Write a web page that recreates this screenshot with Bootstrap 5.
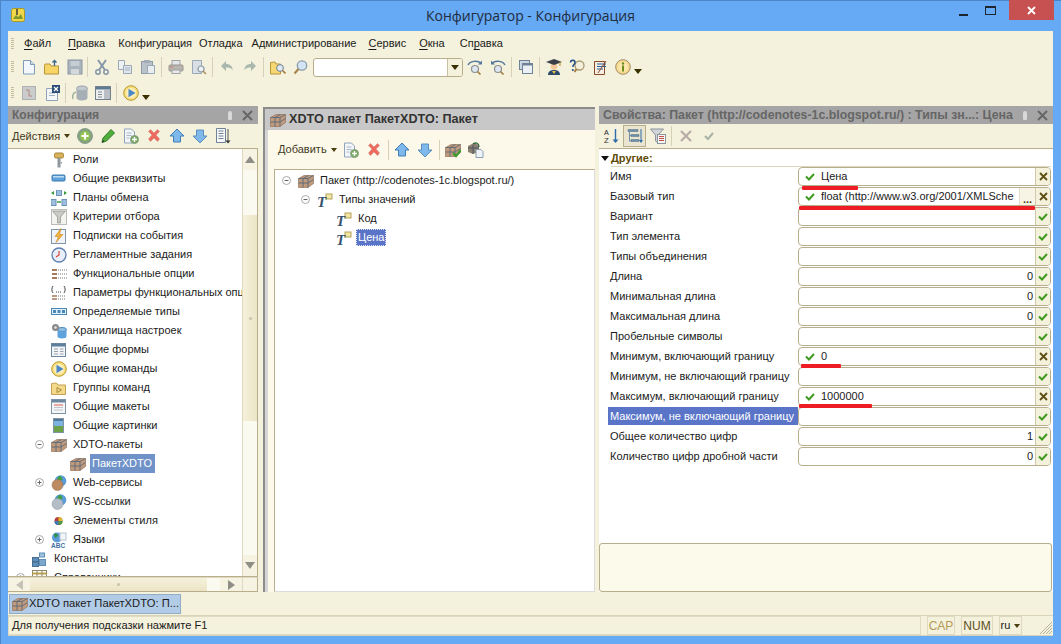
<!DOCTYPE html>
<html lang="ru">
<head>
<meta charset="UTF-8" />
<meta name="viewport" content="width=device-width, initial-scale=1.0" />
<title>Конфигуратор - Конфигурация</title>
<link href="https://cdn.jsdelivr.net/npm/bootstrap@5.3.2/dist/css/bootstrap.min.css" rel="stylesheet" />
<style>
  html, body { height: 644px; overflow: hidden; }
  body { background: #66a9f4; font: 11px/1 "Liberation Sans", Arial, sans-serif; color: #1b1b1b; }
  .ic { width: 16px; height: 16px; display: block; flex: none; }
  .app-win { height: 644px; box-shadow: inset 1px 1px 0 #4c86c8; }

  .title-bar { height: 31px; }
  .title-side { flex: 1 1 0; }
  .title-text { font: 14px "Open Sans", sans-serif; color: #1f2c3e; }
  .app-logo { width: 14px; height: 14px; margin: 8px 0 0 11px; }
  .win-btn { width: 27px; height: 21px; }
  .win-close { width: 45px; height: 20px; background: #c75050; margin: 0 7px 0 5px; }

  .client { margin: 0 8px 8px; height: 605px; background: #f4f1dd; }
  .grip { width: 3px; height: 12px; margin: 0 3px 0 3px; flex: none;
    background: repeating-linear-gradient(#c2bd9c 0 1px, transparent 1px 2px); }
  .menu-bar { height: 25px; }
  .menu-bar u { text-underline-offset: 2px; }
  .menu-bar span:nth-of-type(1) { margin-left: 7px; margin-right: 17px; }
  .menu-bar span:nth-of-type(2) { margin-right: 13px; }
  .menu-bar span:nth-of-type(3) { margin-right: 7px; }
  .menu-bar span:nth-of-type(4) { margin-right: 9px; }
  .menu-bar span:nth-of-type(5) { margin-right: 12px; }
  .menu-bar span:nth-of-type(6) { margin-right: 13px; }
  .menu-bar span:nth-of-type(7) { margin-right: 15px; }
  .tool-bar { height: 22px; }
  .tool-bar-2 { height: 28px; padding-top: 2px; }
  .tb-btn { width: 23px; height: 22px; flex: none; }
  .tb-sep { width: 1px; height: 20px; background: #d6d1b6; margin: 0 2px; flex: none; }
  .tb-sep-tight { margin: 0 2px 0 1px; }
  .tb-pressed { border: 1px solid #b8ae8c; background: #e9e5cf; }
  .tb-more { width: 8px; height: 5px; margin-top: 9px; flex: none; }
  .find-combo { width: 150px; height: 19px; margin-left: 1px; border: 1px solid #b8ae8c; border-radius: 3px; background: #fff; flex: none; overflow: hidden; }
  .find-drop { width: 15px; background: #f4f1dd; border-left: 1px solid #c8c1a2; }

  .work-area { height: 486px; }
  .panel-left { width: 250px; flex: none; }
  .panel-mid { width: 332px; flex: none; margin: 1px 4px 0 5px; background: #fcf9ea; border-left: 2px solid #8b8b8b; box-shadow: inset 3px 0 0 #d5d5d5; }
  .panel-right { flex: 1 1 0; min-width: 0; }

  .cap-bar { height: 18px; background: #a5a5a5; color: #666; font-weight: 700; padding: 0 5px 0 4px; flex: none; }
  .cap-title { font-size: 12px; }
  .cap-title-wide { font-size: 12.350px; }
  .pin { width: 4px; height: 9px; background: #d9d9d9; border-radius: 2px 2px 1px 1px; margin-right: 10px; }
  .cap-close { width: 11px; height: 11px; }
  .act-bar { height: 24px; padding-left: 4px; flex: none; }
  .act-btn { width: 23px; height: 22px; flex: none; }
  .act-label { color: #3f3a1c; }
  .caret { width: 0; height: 0; border: 3px solid transparent; border-top: 4px solid #4a3d10; border-bottom: 0; margin: 0 3px 0 4px; flex: none; }

  .tree-shell { border: 1px solid #b8ae8c; min-height: 0; border-left: 0; }
  .tree-box { background: #fff; overflow: hidden; min-width: 0; padding: 1px 0 0 1px; }
  .tree-row { height: 19px; white-space: nowrap; flex: none; }
  .lvl-1 { padding-left: 7px; }
  .lvl-2 { padding-left: 26px; }
  .lvl-3 { padding-left: 45px; }
  .exp-slot { width: 16px; flex: none; }
  .tree-exp { width: 9px; height: 9px; display: block; }
  .tree-text { margin-left: 6px; }
  .tree-sel { margin-left: 4px; padding: 4px 3px 4px 2px; background: #6f93c8; color: #fff; }
  .tree-focus { margin-left: 4px; padding: 3px 2px; background: #5a75c8; color: #fff; outline: 1px dotted #dfe6ff; outline-offset: -1px; }

  .v-scroll { width: 15px; flex: none; background: #fbfaf1; border-left: 1px solid #ded9bf; }
  .h-scroll { height: 15px; flex: none; background: #fbfaf1; border: 1px solid #b8ae8c; border-top-color: #ded9bf; border-left: 0; }
  .sc-btn { background: #f6f3e2; flex: none; }
  .v-scroll .sc-btn { height: 21px; }
  .h-scroll .sc-btn { width: 22px; }
  .sc-corner { width: 15px; flex: none; background: #f6f3e2; border-left: 1px solid #ded9bf; }
  .sc-thumb-v { height: 206px; margin-top: 45px; background: linear-gradient(90deg, #f6f1dc, #ebe4c6); flex: none; }
  .sc-thumb-h { width: 177px; background: linear-gradient(#f6f1dc, #ebe4c6); flex: none; }
  .sc-dot { width: 3px; height: 3px; border-radius: 50%; background: #c8c3ae; }
  .tri-up, .tri-down, .tri-left, .tri-right { width: 0; height: 0; border: 5px solid transparent; }
  .tri-up { border-bottom: 7px solid #8e8e86; border-top: 0; }
  .tri-down { border-top: 7px solid #8e8e86; border-bottom: 0; }
  .tri-left { border-right: 7px solid #c4c2b6; border-left: 0; }
  .tri-right { border-left: 7px solid #8e8e86; border-right: 0; }

  .mid-cap { height: 23px; background: #c8c8c8; border-top: 2px solid #8b8b8b; padding-left: 5px; color: #333; font-weight: 700; flex: none; }
  .mid-cap b { font-size: 12.6px; margin-left: 3px; }
  .mid-tools { height: 39px; padding-left: 13px; flex: none; }
  .mid-tree { margin-left: 9px; border-left: 1px solid #b8ae8c; border-top: 1px solid #b8ae8c; border-bottom: 1px solid #dcdcdc; border-right: 1px solid #dcdcdc; background: #fff; padding-top: 1px; }

  .prop-bar { height: 25px; border-bottom: 1px solid #b8ae8c; padding-left: 1px; flex: none; }
  .prop-body { background: #fff; min-height: 0; }
  .prop-cat { height: 18px; margin: 0 2px; }
  .cat-tri { width: 0; height: 0; border: 4px solid transparent; border-top: 5px solid #111; border-bottom: 0; margin-right: 2px; }
  .cat-name { color: #5e4a05; font-weight: 700; border-bottom: 1px solid #dcd8c0; flex: 1 1 0; height: 18px; line-height: 18px; }
  .prop-row { height: 20px; flex: none; }
  .prop-label { width: 199px; flex: none; padding-left: 9px; white-space: nowrap; }
  .prop-label span { display: block; padding: 4px 2px 3px; height: 18px; }
  .prop-sel { background: #5a75c8; color: #fff; }
  .prop-field { height: 19px; margin-right: 2px; border: 1px solid #b8ae8c; border-radius: 4px; background: #fff; flex: 1 1 0; min-width: 0; position: relative; }
  .f-val { padding: 0 2px 0 6px; flex: 1 1 0; min-width: 0; white-space: nowrap; overflow: hidden; }
  .f-val svg { margin-right: 6px; flex: none; }
  .f-num { padding-right: 2px; flex: 1 1 0; text-align: right; }
  .f-btn { width: 15px; flex: none; background: #f4f1dd; border-left: 1px solid #cfc9ab; border-radius: 0 3px 3px 0; }
  .f-dots { width: 16px; flex: none; background: #f7f4e5; border-left: 1px solid #e2decb; font-weight: 700; padding-top: 6px; color: #4a3d10; text-align: center; }
  .red-mark { position: absolute; height: 3.500px; background: #ee1c25; border-radius: 1px; z-index: 2; }
  .mark-name { width: 56px; left: 3px; top: 18px; }
  .mark-type { width: 236px; left: 0; top: 18px; }
  .mark-min { width: 40px; left: 2px; top: 16px; }
  .mark-max { width: 73px; left: 0; top: 16px; }
  .prop-desc { height: 49px; margin-right: 1px; background: #fcfaeb; border: 1px solid #b8ae8c; border-radius: 3px; flex: none; }

  .task-bar { height: 24px; border-bottom: 1px solid #d8d4ba; padding: 2px 0 2px 1px; flex: none; }
  .task-tab { width: 172px; height: 20px; background: #b2cbe6; border: 1px solid #94adc6; padding-left: 2px; white-space: nowrap; font-size: 11.200px; }
  .task-tab span { margin-left: 1px; }
  .status-bar { height: 20px; flex: none; border-bottom: 1px solid #d8d4ba; }
  .st-main { width: 913px; height: 19px; border: 1px solid #e0dcc4; padding-left: 3px; flex: none; font-size: 11.100px; }
  .st-cell { height: 19px; border: 1px solid #dedac2; margin-left: 6px; flex: none; justify-content: center; font-size: 12px; }
  .st-cap { width: 28px; color: #b39a55; }
  .st-num { width: 32px; color: #5e4f1c; }
  .st-lang { width: 23px; font-size: 11px; }
  .st-grip { width: 13px; height: 13px; margin: 5px 0 0 17px; }
</style>
</head>
<body>
<svg width="0" height="0" class="d-block">
  <defs>
    <symbol id="i-logo" viewBox="0 0 14 14"><rect x=".5" y=".5" width="13" height="13" rx="2" fill="#f1d84a" stroke="#a89a24"/><path d="M2 11l3-4 2 2 3-3 2 5z" fill="#7f9a2a"/><path d="M6 1v6" stroke="#333" stroke-width="1.4"/></symbol>
    <symbol id="i-doc" viewBox="0 0 16 16"><path d="M2.500 1.500h7l4 4v9.500h-11z" fill="#f3f7fb" stroke="#7f9cb7"/><path d="M9.500 1.500v4h4" fill="#cddcea" stroke="#7f9cb7"/></symbol>
    <symbol id="i-open" viewBox="0 0 16 16"><path d="M.5 6.500V15h14V7H7L6 5H1z" fill="#f6d466" stroke="#b8953a"/><path d="M10.500 7V1.500M8.500 3.500l2-2 2 2" fill="none" stroke="#3a6a8c" stroke-width="1.300"/></symbol>
    <symbol id="i-save" viewBox="0 0 16 16"><rect x="1" y="1" width="14" height="14" fill="#a9b3bc" stroke="#8b98a4"/><rect x="3.500" y="2" width="9" height="5" fill="#c6ced5"/><rect x="4" y="10" width="8" height="5" fill="#d3d8dc"/></symbol>
    <symbol id="i-cut" viewBox="0 0 16 16"><path d="M4 1l7 10M12 1L5 11" stroke="#8596a8" stroke-width="2" fill="none"/><circle cx="4" cy="13" r="2.200" fill="none" stroke="#8596a8" stroke-width="1.500"/><circle cx="12" cy="13" r="2.200" fill="none" stroke="#8596a8" stroke-width="1.500"/></symbol>
    <symbol id="i-copy" viewBox="0 0 16 16"><path d="M1.500 1.500h6v9h-6z" fill="#eef1f4" stroke="#9aa9b8"/><path d="M6.500 6.500h8v8h-8z" fill="#dfe5ea" stroke="#9aa9b8"/><path d="M8 9h5M8 11h5" stroke="#a5b2bf"/></symbol>
    <symbol id="i-paste" viewBox="0 0 16 16"><rect x="1.500" y="2.500" width="11" height="12" fill="#b9c2c9" stroke="#8e9ca9"/><rect x="4" y="1" width="6" height="3" fill="#a2adb7"/><path d="M7.500 6.500h7v8h-7z" fill="#e9edf0" stroke="#9aa9b8"/></symbol>
    <symbol id="i-print" viewBox="0 0 16 16"><rect x="4" y="1.500" width="8" height="5" fill="#e3e5e6" stroke="#a0a4a8"/><rect x="1" y="6" width="14" height="6" rx="1" fill="#b9b3ad" stroke="#9a9590"/><rect x="4" y="11" width="8" height="3.500" fill="#e9e9e9" stroke="#a0a4a8"/><rect x="2.500" y="7.500" width="2" height="1" fill="#d06a5a"/></symbol>
    <symbol id="i-prev" viewBox="0 0 16 16"><path d="M1.500 1.500h9v13h-9z" fill="#d9dfe4" stroke="#9aa9b8"/><circle cx="10" cy="10" r="3" fill="#eef2f5" stroke="#8a98a5" stroke-width="1.200"/><path d="M12 12l3 3" stroke="#b08f5e" stroke-width="1.600"/></symbol>
    <symbol id="i-undo" viewBox="0 0 16 16"><path d="M2 7l5-5v3c4 0 6 2 7 6-2-2-4-2.500-7-2.500V12z" fill="#a9b8ae"/></symbol>
    <symbol id="i-redo" viewBox="0 0 16 16"><path d="M14 7L9 2v3C5 5 3 7 2 11c2-2 4-2.500 7-2.500V12z" fill="#a9b8ae"/></symbol>
    <symbol id="i-fold-lens" viewBox="0 0 16 16"><path d="M.5 3.500V15h10V5H6L5 3z" fill="#f6d872" stroke="#b8953a"/><circle cx="10" cy="9" r="3.400" fill="#dfeaf4" stroke="#6f7f8f"/><path d="M12.500 11.500l3 3" stroke="#a47c3f" stroke-width="1.700"/></symbol>
    <symbol id="i-lens" viewBox="0 0 16 16"><circle cx="9" cy="6.500" r="4.700" fill="#d3e4f5" stroke="#8b9bab" stroke-width="1.300"/><path d="M5.500 10l-4 4.500" stroke="#a9864f" stroke-width="2.200"/></symbol>
    <symbol id="i-find-a" viewBox="0 0 16 16"><circle cx="8" cy="10" r="3.500" fill="#dbe6f0" stroke="#8c8f92" stroke-width="1.200"/><path d="M10.500 12.500l3 3" stroke="#a47c3f" stroke-width="1.600"/><path d="M1 6c2-4 9-5 13-2" fill="none" stroke="#54799c" stroke-width="1.400"/><path d="M15 1.500v4h-4z" fill="#54799c"/></symbol>
    <symbol id="i-find-b" viewBox="0 0 16 16"><circle cx="8" cy="10" r="3.500" fill="#dbe6f0" stroke="#8c8f92" stroke-width="1.200"/><path d="M10.500 12.500l3 3" stroke="#a47c3f" stroke-width="1.600"/><path d="M15 6C13 2 6 1 2 4" fill="none" stroke="#54799c" stroke-width="1.400"/><path d="M1 1.500v4h4z" fill="#54799c"/></symbol>
    <symbol id="i-windows" viewBox="0 0 16 16"><rect x="1.500" y="1.500" width="10" height="9" fill="#cdd8e4" stroke="#6f8296"/><rect x="4.500" y="4.500" width="10" height="10" fill="#eaf0f6" stroke="#6f8296"/><rect x="4.500" y="4.500" width="10" height="2" fill="#6f8296"/></symbol>
    <symbol id="i-student" viewBox="0 0 16 16"><path d="M2 16c0-4 3-5 6-5s6 1 6 5z" fill="#2d4a6a"/><path d="M6 12l2 3 2-3z" fill="#e9c24a"/><circle cx="8" cy="7.500" r="3.300" fill="#f2c79a"/><path d="M0 3l8-3 8 3-8 3z" fill="#3a3f4a"/><path d="M14 3v4" stroke="#b88a20"/></symbol>
    <symbol id="i-help-lens" viewBox="0 0 16 16"><circle cx="10.500" cy="6.500" r="4.500" fill="#f4efdd" stroke="#a89a70" stroke-width="1.300"/><path d="M7.500 10l-2 3" stroke="#a47c3f" stroke-width="2"/><path d="M1.500 3.500c0-3 4.500-3 4.500 0 0 2-2.200 2-2.200 4.500" fill="none" stroke="#1e4e84" stroke-width="1.500"/><circle cx="3.800" cy="11" r="1" fill="#1e4e84"/></symbol>
    <symbol id="i-book" viewBox="0 0 16 16"><path d="M2.500 2.500h10v13h-10z" fill="#f6eee0" stroke="#8a4a2a"/><path d="M5 5h9M5 7.500h9M5 10h6" stroke="#2b5f9c"/><path d="M6 14l8-12" stroke="#8a4a2a"/></symbol>
    <symbol id="i-info" viewBox="0 0 16 16"><circle cx="8" cy="8" r="7.300" fill="#f7d98b" stroke="#a08d6c"/><circle cx="8" cy="8" r="5" fill="#fbe6ad"/><rect x="7" y="6.500" width="2" height="6" fill="#6b8e1f"/><circle cx="8" cy="4.500" r="1.200" fill="#6b8e1f"/></symbol>
    <symbol id="i-more" viewBox="0 0 8 5"><path d="M0 0h8L4 5z" fill="#3b3000"/></symbol>
    <symbol id="i-tb-tree" viewBox="0 0 16 16"><rect x="1.500" y="1.500" width="13" height="13" fill="#c9cbcc" stroke="#aeb0b2"/><path d="M5 5h3M8 5v6h3" fill="none" stroke="#b08a7a"/></symbol>
    <symbol id="i-tb-x" viewBox="0 0 16 16"><path d="M2.500 3.500h8l3 3v9h-11z" fill="#f4f6f8" stroke="#8ea3b7"/><path d="M5 8h6M5 10.500h6" stroke="#9fb0c0"/><rect x="8" y="0" width="8" height="8" fill="#2a4d78"/><path d="M10 2l4 4M14 2l-4 4" stroke="#fff" stroke-width="1.200"/></symbol>
    <symbol id="i-db" viewBox="0 0 16 16"><ellipse cx="10" cy="3.500" rx="5.500" ry="2.500" fill="#c3c9ce" stroke="#99a2aa"/><path d="M4.500 3.500V13c0 1.500 2.500 2.500 5.500 2.500s5.500-1 5.500-2.500V3.500c0 1.500-2.500 2.500-5.500 2.500s-5.500-1-5.500-2.500z" fill="#a7afb6"/><path d="M1 14c-1-4 0-6 3-7" fill="none" stroke="#9fb39f" stroke-width="1.500"/></symbol>
    <symbol id="i-form-g" viewBox="0 0 16 16"><rect x=".5" y="1.500" width="15" height="13" fill="#eceeef" stroke="#71808c"/><rect x="1" y="2" width="14" height="2.500" fill="#5d7a93"/><rect x="9" y="5" width="6" height="9" fill="#b9bfc4"/><path d="M3 7h4M3 9.500h4M3 12h4" stroke="#7f8b95"/></symbol>
    <symbol id="i-run" viewBox="0 0 16 16"><circle cx="8" cy="8" r="7.300" fill="#f7dc7a" stroke="#b99a2e"/><circle cx="8" cy="8" r="5.300" fill="#fbeeb8"/><path d="M5.500 3.800L12.500 8l-7 4.200z" fill="#4c88c4"/></symbol>

    <symbol id="i-add-round" viewBox="0 0 16 16"><circle cx="8" cy="8" r="7.500" fill="#7fa47d" stroke="#8f9f90"/><circle cx="8" cy="8" r="5" fill="#93c24f"/><path d="M8 4.500v7M4.500 8h7" stroke="#fff" stroke-width="2"/></symbol>
    <symbol id="i-pencil" viewBox="0 0 16 16"><path d="M11 1.500l3.500 3.500-8 8L2 14.500 3 10z" fill="#4fae3b" stroke="#2f7d28"/><path d="M2 14.500L3 12l1.500 1.500z" fill="#333"/></symbol>
    <symbol id="i-doc-add" viewBox="0 0 16 16"><path d="M1.500 1h7l3 3v11h-10z" fill="#f3f6f9" stroke="#8fa4b8"/><path d="M3.500 5h5M3.500 7.500h5M3.500 10h3" stroke="#aab8c6"/><circle cx="11.500" cy="11.500" r="4" fill="#74a85a" stroke="#8a9f88"/><path d="M11.500 9v5M9 11.500h5" stroke="#fff" stroke-width="1.400"/></symbol>
    <symbol id="i-del" viewBox="0 0 16 16"><path d="M2.500 3.500l2-2L8 5l3.500-3.500 2 2L10 7l3.500 4-2 2.500L8 10l-3.500 3.500-2-2.500L6 7z" fill="#ee6a5e" stroke="#d2887e" stroke-width=".6"/></symbol>
    <symbol id="i-up" viewBox="0 0 16 16"><path d="M8 1l7 7h-3.500v6h-7V8H1z" fill="#7fb8ea" stroke="#3f7db4"/></symbol>
    <symbol id="i-down" viewBox="0 0 16 16"><path d="M8 15l7-7h-3.500V2h-7v6H1z" fill="#7fb8ea" stroke="#5b8fbd"/></symbol>
    <symbol id="i-list" viewBox="0 0 16 16"><path d="M1.500 .5h9v14h-9z" fill="#f4f6f8" stroke="#6f8296"/><path d="M3.500 3h5M3.500 5.500h5M3.500 8h5M3.500 10.500h5" stroke="#6f8296"/><path d="M13 1v12" stroke="#555"/><path d="M10.500 12.500h5L13 15.500z" fill="#333"/></symbol>
    <symbol id="i-box" viewBox="0 0 16 16"><path d="M.5 5.500L6 2.500h9.500v8L10 14.500H.5z" fill="#c09a7c" stroke="#96745a" stroke-width=".7"/><path d="M.5 5.500h9.500l5.500-3M10 5.500v9M.5 10h9.500l5.500-3.500M5 5.500v9M5 5.500l5.500-3" fill="none" stroke="#5b6a78" stroke-width=".9"/></symbol>
    <symbol id="i-box-ok" viewBox="0 0 16 16"><use href="#i-box"/><path d="M8 11l3 3 5-6" fill="none" stroke="#3e9b2d" stroke-width="2.200"/></symbol>
    <symbol id="i-box-doc" viewBox="0 0 16 16"><path d="M0 4l6-3 5 2v7l-6 2-5-2z" fill="#8b8172"/><path d="M0 6h11M5 3v9" stroke="#4f5660"/><path d="M8 7.500h5l2 2V15.500H8z" fill="#eef3f7" stroke="#89a0b4"/><path d="M5 2c3-2 6-1 6 3" fill="none" stroke="#2f6a3a" stroke-width="1.300"/></symbol>

    <symbol id="i-key" viewBox="0 0 16 16"><rect x="3.500" y="1" width="9" height="5" rx="1.500" fill="#d9b35a" stroke="#a8853d"/><rect x="6.500" y="6" width="3" height="9.500" fill="#8f979f"/><rect x="9.500" y="10" width="1.500" height="1.500" fill="#8f979f"/></symbol>
    <symbol id="i-attr" viewBox="0 0 16 16"><rect x="1" y="4" width="13" height="6" rx="1" fill="#5ea3dc" stroke="#3a78ad"/><rect x="2" y="5" width="11" height="1.500" fill="#bcdcf3"/></symbol>
    <symbol id="i-exch" viewBox="0 0 16 16"><rect x="5.500" y="0" width="5" height="5.500" fill="#9dbfdf" stroke="#6d92b5"/><rect x="0" y="9.500" width="5" height="6" fill="#9dbfdf" stroke="#6d92b5"/><rect x="11" y="9.500" width="5" height="6" fill="#9dbfdf" stroke="#6d92b5"/><path d="M0 3l3-2v4zM16 3l-3-2v4z" fill="#3e9b3e"/><path d="M6 12h4" stroke="#3e9b3e" stroke-width="1.500"/></symbol>
    <symbol id="i-filter" viewBox="0 0 16 16"><rect x=".5" y=".5" width="15" height="15" fill="#f3f3f0" stroke="#bcbcb8"/><path d="M1.500 2h13L9.500 8v6h-3V8z" fill="#c9c9c5" stroke="#8f8f8a" stroke-width=".7"/></symbol>
    <symbol id="i-bolt" viewBox="0 0 16 16"><rect x=".5" y="1.500" width="14" height="14" fill="#f0f4f8" stroke="#8196ab"/><path d="M10 .5L4 8.500h3.500L5 14.500l7-8H8.500z" fill="#f0b53c" stroke="#c6841f" stroke-width=".6"/></symbol>
    <symbol id="i-clock" viewBox="0 0 16 16"><circle cx="8" cy="8" r="7" fill="#e7eef7" stroke="#5d7fae" stroke-width="1.300"/><path d="M8 4v4l-3 2" stroke="#d8433d" fill="none" stroke-width="1.200"/></symbol>
    <symbol id="i-func" viewBox="0 0 16 16"><path d="M1 4h5M1 8h5M1 12h5" stroke="#a77a5a" stroke-width="2"/><path d="M7 4h9M7 8h9M7 12h9" stroke="#777" stroke-dasharray="1 1"/></symbol>
    <symbol id="i-param" viewBox="0 0 16 16"><path d="M2 1C.5 3 .5 6 2 8M13 1c1.500 2 1.500 5 0 7" fill="none" stroke="#444"/><path d="M5 7h1M7 7h1M9 7h1" stroke="#444"/><path d="M1 11h5M1 14h5" stroke="#a77a5a" stroke-width="1.500"/><path d="M7 11h8M7 14h8" stroke="#777" stroke-dasharray="1 1"/></symbol>
    <symbol id="i-types" viewBox="0 0 16 16"><rect x=".5" y="4.500" width="15" height="6" fill="#dff0fa" stroke="#4b87b5"/><rect x="2" y="6" width="3" height="3" fill="#4b87b5"/><rect x="6.500" y="6" width="3" height="3" fill="#4b87b5"/><rect x="11" y="6" width="3" height="3" fill="#4b87b5"/></symbol>
    <symbol id="i-store" viewBox="0 0 16 16"><ellipse cx="11" cy="6.500" rx="4.500" ry="2" fill="#8fc1e6" stroke="#4a87b8"/><path d="M6.500 6.500v7c0 1 2 2 4.500 2s4.500-1 4.500-2v-7c0 1-2 2-4.500 2s-4.500-1-4.500-2z" fill="#5ea3dc"/><circle cx="4.500" cy="4.500" r="3.500" fill="#8a8a8a"/><circle cx="4.500" cy="4.500" r="1.300" fill="#e4e4e4"/></symbol>
    <symbol id="i-form" viewBox="0 0 16 16"><rect x=".5" y="1.500" width="14" height="13" fill="#f2f4f6" stroke="#6d879f"/><rect x="1" y="2" width="13" height="2.500" fill="#5d7f9e"/><path d="M3 7h4M3 9.500h4M3 12h4M9 7h3.500M9 9.500h3.500M9 12h3.500" stroke="#97a3ae"/></symbol>
    <symbol id="i-folder-cmd" viewBox="0 0 16 16"><path d="M.5 3.500V14.500h14V5H7L5.500 3z" fill="#f4d98a" stroke="#c3a154"/><path d="M6 7.500l4.500 2.500L6 12.500z" fill="none" stroke="#a88b3f"/></symbol>
    <symbol id="i-layout" viewBox="0 0 16 16"><rect x=".5" y=".5" width="14" height="14" fill="#f5f6f7" stroke="#7f93a7"/><rect x="1" y="1" width="13" height="2.500" fill="#6d879f"/><path d="M3 6h9" stroke="#dd5a4a"/><path d="M3 8.500h9M3 11h9" stroke="#bcc5cd"/></symbol>
    <symbol id="i-pic" viewBox="0 0 16 16"><rect x="2.500" y=".5" width="10" height="14" fill="#7db4df" stroke="#7f93a7"/><rect x="3" y="8" width="9" height="6" fill="#6ea24a"/><rect x="3" y="1" width="9" height="2" fill="#50789b"/></symbol>
    <symbol id="i-globe-b" viewBox="0 0 16 16"><circle cx="9.500" cy="6" r="5.800" fill="#5b9bd8"/><path d="M8 1c2 0 4 2 3 4l-3 1-2-2z" fill="#3ea040"/><circle cx="6.500" cy="10" r="5.500" fill="#bd8b62" stroke="#97704f" stroke-width=".5"/></symbol>
    <symbol id="i-globe-g" viewBox="0 0 16 16"><circle cx="9.500" cy="6" r="5.800" fill="#5b9bd8"/><path d="M8 1c2 0 4 2 3 4l-3 1-2-2z" fill="#3ea040"/><circle cx="6.500" cy="10" r="5.500" fill="#b5bdc6" stroke="#8d969f" stroke-width=".5"/></symbol>
    <symbol id="i-dots" viewBox="0 0 16 16"><circle cx="7.500" cy="8" r="4" fill="#b33c3c"/><path d="M7.500 4a4 4 0 0 1 4 4h-4z" fill="#e0b92d"/><path d="M3.500 8a4 4 0 0 0 4 4V8z" fill="#3b7cbd"/><path d="M11.500 8a4 4 0 0 1-4 4V8z" fill="#4aa04a"/></symbol>
    <symbol id="i-lang" viewBox="0 0 16 16"><circle cx="6" cy="5.500" r="5" fill="#5b9bd8"/><path d="M3 2c2-1 4 0 4 2L4 6z" fill="#2f8f3c"/><rect x="9" y="1" width="6" height="7" fill="#f3f6f9" stroke="#b7c4d0"/><text x="0" y="15.500" font-size="6.500" font-weight="700" fill="#3f6f9e" font-family="Liberation Sans">ABC</text></symbol>
    <symbol id="i-const" viewBox="0 0 16 16"><rect x=".5" y="6.500" width="6" height="4" fill="#5f8fb8" stroke="#456f94"/><rect x="7.500" y="2" width="5" height="4" fill="#9fc3e2" stroke="#5f8fb8"/><rect x=".5" y="11" width="6" height="4.500" fill="#5f8fb8" stroke="#456f94"/><rect x="7.500" y="8.500" width="6" height="6" fill="#7ba7cc" stroke="#5f8fb8"/></symbol>
    <symbol id="i-cat" viewBox="0 0 16 16"><rect x=".5" y=".5" width="14" height="14" fill="#fff" stroke="#8f8a66"/><path d="M.5 3.500h14" stroke="#c1a24a" stroke-width="2"/><path d="M5 1v13M10 1v13M1 8h13" stroke="#8f8a66"/></symbol>
    <symbol id="i-t" viewBox="0 0 16 16"><rect x="9" y="2" width="6" height="5" fill="#f3e6a2" stroke="#b3a15b"/><text x="0" y="15" font-size="15" font-weight="700" font-style="italic" fill="#38536f" font-family="Liberation Serif">T</text></symbol>

    <symbol id="i-sort" viewBox="0 0 16 16"><text x="0" y="7" font-size="8" fill="#333" font-family="Liberation Mono">A</text><text x="0" y="15" font-size="8" fill="#333" font-family="Liberation Mono">Z</text><path d="M11.500 1v13" stroke="#2f6da8" stroke-width="1.400"/><path d="M8.500 11.500h6L11.500 15z" fill="#2f6da8"/></symbol>
    <symbol id="i-cats" viewBox="0 0 16 16"><path d="M1 1.500h10v2H1zM4 6.500h8v2H4zM4 11.500h8v2H4z" fill="#6f8fa8" stroke="#4f6f88" stroke-width=".5"/><path d="M2.500 3.500v9.500h2M2.500 7.500h2" fill="none" stroke="#6f8fa8"/><path d="M14 1v13" stroke="#2f6da8"/><path d="M12 12h4l-2 3z" fill="#2f6da8"/></symbol>
    <symbol id="i-filt" viewBox="0 0 16 16"><path d="M.5 1h13L8 7v8l-2.500-2V7z" fill="#d1d5d9" stroke="#8c949c"/><rect x="7.500" y="6.500" width="8" height="9" fill="#f4f6f8" stroke="#8c949c"/><path d="M9 8.500h5M9 10.500h5M9 12.500h5" stroke="#c05040"/></symbol>
    <symbol id="i-x-gray" viewBox="0 0 16 16"><path d="M3 3l10 10M13 3L3 13" stroke="#b7aca6" stroke-width="2.200"/></symbol>
    <symbol id="i-ok-gray" viewBox="0 0 16 16"><path d="M4 8l3 3 5-6" fill="none" stroke="#a9b3a5" stroke-width="2"/></symbol>

    <symbol id="i-check" viewBox="0 0 10 8"><path d="M1 3.500l3 3 5-5.500" fill="none" stroke="#3f9b1f" stroke-width="2"/></symbol>
    <symbol id="i-cross" viewBox="0 0 9 9"><path d="M1 1l7 7M8 1L1 8" stroke="#5e4f12" stroke-width="1.800"/></symbol>
    <symbol id="i-minus" viewBox="0 0 9 9"><circle cx="4.500" cy="4.500" r="4" fill="#fff" stroke="#a8a8a8"/><path d="M2.500 4.500h4" stroke="#666"/></symbol>
    <symbol id="i-plus" viewBox="0 0 9 9"><circle cx="4.500" cy="4.500" r="4" fill="#fff" stroke="#a8a8a8"/><path d="M2.500 4.500h4M4.500 2.500v4" stroke="#666"/></symbol>
  </defs>
</svg>

<div class="app-win d-flex flex-column">
  <div class="title-bar d-flex align-items-center">
    <div class="title-side align-self-start"><svg class="app-logo d-block"><use href="#i-logo"/></svg></div>
    <div class="title-text">Конфигуратор - Конфигурация</div>
    <div class="title-side align-self-start d-flex justify-content-end">
      <div class="win-btn d-flex align-items-center justify-content-center"><svg width="9" height="3" class="mt-2"><rect width="9" height="2" y="1" fill="#1d2530"/></svg></div>
      <div class="win-btn d-flex align-items-center justify-content-center"><svg width="11" height="9"><rect x=".5" y=".5" width="10" height="8" fill="none" stroke="#1d2530"/><rect width="11" height="2" fill="#1d2530"/></svg></div>
      <div class="win-close d-flex align-items-center justify-content-center"><svg width="9" height="9"><path d="M1 1l7 7M8 1L1 8" stroke="#fff" stroke-width="1.800"/></svg></div>
    </div>
  </div>

  <div class="client d-flex flex-column">
    <div class="menu-bar d-flex align-items-center">
      <div class="grip"></div>
      <span><u>Ф</u>айл</span>
      <span><u>П</u>равка</span>
      <span>Конфигурация</span>
      <span>Отладка</span>
      <span>Администрирование</span>
      <span><u>С</u>ервис</span>
      <span><u>О</u>кна</span>
      <span>Сп<u>р</u>авка</span>
    </div>

    <div class="tool-bar d-flex align-items-center">
      <div class="grip"></div>
      <div class="tb-btn d-flex align-items-center justify-content-center"><svg class="ic"><use href="#i-doc"/></svg></div>
      <div class="tb-btn d-flex align-items-center justify-content-center"><svg class="ic"><use href="#i-open"/></svg></div>
      <div class="tb-btn d-flex align-items-center justify-content-center"><svg class="ic"><use href="#i-save"/></svg></div>
      <div class="tb-sep tb-sep-tight"></div>
      <div class="tb-btn d-flex align-items-center justify-content-center"><svg class="ic"><use href="#i-cut"/></svg></div>
      <div class="tb-btn d-flex align-items-center justify-content-center"><svg class="ic"><use href="#i-copy"/></svg></div>
      <div class="tb-btn d-flex align-items-center justify-content-center"><svg class="ic"><use href="#i-paste"/></svg></div>
      <div class="tb-sep"></div>
      <div class="tb-btn d-flex align-items-center justify-content-center"><svg class="ic"><use href="#i-print"/></svg></div>
      <div class="tb-btn d-flex align-items-center justify-content-center"><svg class="ic"><use href="#i-prev"/></svg></div>
      <div class="tb-sep"></div>
      <div class="tb-btn d-flex align-items-center justify-content-center"><svg class="ic"><use href="#i-undo"/></svg></div>
      <div class="tb-btn d-flex align-items-center justify-content-center"><svg class="ic"><use href="#i-redo"/></svg></div>
      <div class="tb-sep"></div>
      <div class="tb-btn d-flex align-items-center justify-content-center"><svg class="ic"><use href="#i-fold-lens"/></svg></div>
      <div class="tb-btn d-flex align-items-center justify-content-center"><svg class="ic"><use href="#i-lens"/></svg></div>
      <div class="find-combo d-flex"><div class="flex-grow-1"></div><div class="find-drop d-flex align-items-center justify-content-center"><svg width="8" height="5"><use href="#i-more"/></svg></div></div>
      <div class="tb-btn d-flex align-items-center justify-content-center"><svg class="ic"><use href="#i-find-a"/></svg></div>
      <div class="tb-btn d-flex align-items-center justify-content-center"><svg class="ic"><use href="#i-find-b"/></svg></div>
      <div class="tb-sep"></div>
      <div class="tb-btn d-flex align-items-center justify-content-center"><svg class="ic"><use href="#i-windows"/></svg></div>
      <div class="tb-sep"></div>
      <div class="tb-btn d-flex align-items-center justify-content-center"><svg class="ic"><use href="#i-student"/></svg></div>
      <div class="tb-btn d-flex align-items-center justify-content-center"><svg class="ic"><use href="#i-help-lens"/></svg></div>
      <div class="tb-btn d-flex align-items-center justify-content-center"><svg class="ic"><use href="#i-book"/></svg></div>
      <div class="tb-btn d-flex align-items-center justify-content-center"><svg class="ic"><use href="#i-info"/></svg></div>
      <svg class="tb-more"><use href="#i-more"/></svg>
    </div>

    <div class="tool-bar-2 d-flex align-items-center">
      <div class="grip"></div>
      <div class="tb-btn d-flex align-items-center justify-content-center"><svg class="ic"><use href="#i-tb-tree"/></svg></div>
      <div class="tb-btn d-flex align-items-center justify-content-center"><svg class="ic"><use href="#i-tb-x"/></svg></div>
      <div class="tb-sep"></div>
      <div class="tb-btn d-flex align-items-center justify-content-center"><svg class="ic"><use href="#i-db"/></svg></div>
      <div class="tb-btn d-flex align-items-center justify-content-center"><svg class="ic"><use href="#i-form-g"/></svg></div>
      <div class="tb-sep"></div>
      <div class="tb-btn d-flex align-items-center justify-content-center"><svg class="ic"><use href="#i-run"/></svg></div>
      <svg class="tb-more"><use href="#i-more"/></svg>
    </div>

    <div class="work-area d-flex">
      <!-- дерево конфигурации -->
      <div class="panel-left d-flex flex-column">
        <div class="cap-bar d-flex align-items-center">
          <span class="cap-title flex-grow-1">Конфигурация</span>
          <div class="pin"></div>
          <svg class="cap-close"><path d="M1 1l9 9M10 1l-9 9" stroke="#666" stroke-width="2"/></svg>
        </div>
        <div class="act-bar d-flex align-items-center">
          <span class="act-label">Действия</span><span class="caret"></span>
          <div class="act-btn d-flex align-items-center justify-content-center"><svg class="ic"><use href="#i-add-round"/></svg></div>
          <div class="act-btn d-flex align-items-center justify-content-center"><svg class="ic"><use href="#i-pencil"/></svg></div>
          <div class="act-btn d-flex align-items-center justify-content-center"><svg class="ic"><use href="#i-doc-add"/></svg></div>
          <div class="act-btn d-flex align-items-center justify-content-center"><svg class="ic"><use href="#i-del"/></svg></div>
          <div class="act-btn d-flex align-items-center justify-content-center"><svg class="ic"><use href="#i-up"/></svg></div>
          <div class="act-btn d-flex align-items-center justify-content-center"><svg class="ic"><use href="#i-down"/></svg></div>
          <div class="act-btn d-flex align-items-center justify-content-center"><svg class="ic"><use href="#i-list"/></svg></div>
        </div>
        <div class="tree-shell d-flex flex-grow-1">
          <div class="tree-box flex-grow-1 d-flex flex-column">
            <div class="tree-row lvl-2 d-flex align-items-center"><span class="exp-slot"></span><svg class="ic"><use href="#i-key"/></svg><span class="tree-text">Роли</span></div>
            <div class="tree-row lvl-2 d-flex align-items-center"><span class="exp-slot"></span><svg class="ic"><use href="#i-attr"/></svg><span class="tree-text">Общие реквизиты</span></div>
            <div class="tree-row lvl-2 d-flex align-items-center"><span class="exp-slot"></span><svg class="ic"><use href="#i-exch"/></svg><span class="tree-text">Планы обмена</span></div>
            <div class="tree-row lvl-2 d-flex align-items-center"><span class="exp-slot"></span><svg class="ic"><use href="#i-filter"/></svg><span class="tree-text">Критерии отбора</span></div>
            <div class="tree-row lvl-2 d-flex align-items-center"><span class="exp-slot"></span><svg class="ic"><use href="#i-bolt"/></svg><span class="tree-text">Подписки на события</span></div>
            <div class="tree-row lvl-2 d-flex align-items-center"><span class="exp-slot"></span><svg class="ic"><use href="#i-clock"/></svg><span class="tree-text">Регламентные задания</span></div>
            <div class="tree-row lvl-2 d-flex align-items-center"><span class="exp-slot"></span><svg class="ic"><use href="#i-func"/></svg><span class="tree-text">Функциональные опции</span></div>
            <div class="tree-row lvl-2 d-flex align-items-center"><span class="exp-slot"></span><svg class="ic"><use href="#i-param"/></svg><span class="tree-text">Параметры функциональных опц</span></div>
            <div class="tree-row lvl-2 d-flex align-items-center"><span class="exp-slot"></span><svg class="ic"><use href="#i-types"/></svg><span class="tree-text">Определяемые типы</span></div>
            <div class="tree-row lvl-2 d-flex align-items-center"><span class="exp-slot"></span><svg class="ic"><use href="#i-store"/></svg><span class="tree-text">Хранилища настроек</span></div>
            <div class="tree-row lvl-2 d-flex align-items-center"><span class="exp-slot"></span><svg class="ic"><use href="#i-form"/></svg><span class="tree-text">Общие формы</span></div>
            <div class="tree-row lvl-2 d-flex align-items-center"><span class="exp-slot"></span><svg class="ic"><use href="#i-run"/></svg><span class="tree-text">Общие команды</span></div>
            <div class="tree-row lvl-2 d-flex align-items-center"><span class="exp-slot"></span><svg class="ic"><use href="#i-folder-cmd"/></svg><span class="tree-text">Группы команд</span></div>
            <div class="tree-row lvl-2 d-flex align-items-center"><span class="exp-slot"></span><svg class="ic"><use href="#i-layout"/></svg><span class="tree-text">Общие макеты</span></div>
            <div class="tree-row lvl-2 d-flex align-items-center"><span class="exp-slot"></span><svg class="ic"><use href="#i-pic"/></svg><span class="tree-text">Общие картинки</span></div>
            <div class="tree-row lvl-2 d-flex align-items-center"><span class="exp-slot"><svg class="tree-exp"><use href="#i-minus"/></svg></span><svg class="ic"><use href="#i-box"/></svg><span class="tree-text">XDTO-пакеты</span></div>
            <div class="tree-row lvl-3 d-flex align-items-center"><span class="exp-slot"></span><svg class="ic"><use href="#i-box"/></svg><span class="tree-sel">ПакетXDTO</span></div>
            <div class="tree-row lvl-2 d-flex align-items-center"><span class="exp-slot"><svg class="tree-exp"><use href="#i-plus"/></svg></span><svg class="ic"><use href="#i-globe-b"/></svg><span class="tree-text">Web-сервисы</span></div>
            <div class="tree-row lvl-2 d-flex align-items-center"><span class="exp-slot"></span><svg class="ic"><use href="#i-globe-g"/></svg><span class="tree-text">WS-ссылки</span></div>
            <div class="tree-row lvl-2 d-flex align-items-center"><span class="exp-slot"></span><svg class="ic"><use href="#i-dots"/></svg><span class="tree-text">Элементы стиля</span></div>
            <div class="tree-row lvl-2 d-flex align-items-center"><span class="exp-slot"><svg class="tree-exp"><use href="#i-plus"/></svg></span><svg class="ic"><use href="#i-lang"/></svg><span class="tree-text">Языки</span></div>
            <div class="tree-row lvl-1 d-flex align-items-center"><span class="exp-slot"></span><svg class="ic"><use href="#i-const"/></svg><span class="tree-text">Константы</span></div>
            <div class="tree-row lvl-1 d-flex align-items-center"><span class="exp-slot"><svg class="tree-exp"><use href="#i-plus"/></svg></span><svg class="ic"><use href="#i-cat"/></svg><span class="tree-text">Справочники</span></div>
          </div>
          <div class="v-scroll d-flex flex-column">
            <div class="sc-btn d-flex align-items-center justify-content-center"><div class="tri-up"></div></div>
            <div class="sc-thumb-v d-flex align-items-center justify-content-center"><div class="sc-dot"></div></div>
            <div class="flex-grow-1"></div>
            <div class="sc-btn d-flex align-items-center justify-content-center"><div class="tri-down"></div></div>
          </div>
        </div>
        <div class="h-scroll d-flex">
          <div class="sc-btn d-flex align-items-center justify-content-center"><div class="tri-left"></div></div>
          <div class="sc-thumb-h d-flex align-items-center justify-content-center"><div class="sc-dot"></div></div>
          <div class="flex-grow-1"></div>
          <div class="sc-btn d-flex align-items-center justify-content-center"><div class="tri-right"></div></div>
          <div class="sc-corner"></div>
        </div>
      </div>

      <!-- окно XDTO-пакета -->
      <div class="panel-mid d-flex flex-column">
        <div class="mid-cap d-flex align-items-center"><svg class="ic"><use href="#i-box"/></svg><b>XDTO пакет ПакетXDTO: Пакет</b></div>
        <div class="mid-tools d-flex align-items-center">
          <span class="act-label">Добавить</span><span class="caret"></span>
          <div class="act-btn d-flex align-items-center justify-content-center"><svg class="ic"><use href="#i-doc-add"/></svg></div>
          <div class="act-btn d-flex align-items-center justify-content-center"><svg class="ic"><use href="#i-del"/></svg></div>
          <div class="tb-sep"></div>
          <div class="act-btn d-flex align-items-center justify-content-center"><svg class="ic"><use href="#i-up"/></svg></div>
          <div class="act-btn d-flex align-items-center justify-content-center"><svg class="ic"><use href="#i-down"/></svg></div>
          <div class="tb-sep"></div>
          <div class="act-btn d-flex align-items-center justify-content-center"><svg class="ic"><use href="#i-box-ok"/></svg></div>
          <div class="act-btn d-flex align-items-center justify-content-center"><svg class="ic"><use href="#i-box-doc"/></svg></div>
        </div>
        <div class="mid-tree flex-grow-1">
          <div class="tree-row lvl-1 d-flex align-items-center"><span class="exp-slot"><svg class="tree-exp"><use href="#i-minus"/></svg></span><svg class="ic"><use href="#i-box"/></svg><span class="tree-text">Пакет (http://codenotes-1c.blogspot.ru/)</span></div>
          <div class="tree-row lvl-2 d-flex align-items-center"><span class="exp-slot"><svg class="tree-exp"><use href="#i-minus"/></svg></span><svg class="ic"><use href="#i-t"/></svg><span class="tree-text">Типы значений</span></div>
          <div class="tree-row lvl-3 d-flex align-items-center"><span class="exp-slot"></span><svg class="ic"><use href="#i-t"/></svg><span class="tree-text">Код</span></div>
          <div class="tree-row lvl-3 d-flex align-items-center"><span class="exp-slot"></span><svg class="ic"><use href="#i-t"/></svg><span class="tree-focus">Цена</span></div>
        </div>
      </div>

      <!-- свойства -->
      <div class="panel-right d-flex flex-column">
        <div class="cap-bar d-flex align-items-center">
          <span class="cap-title-wide flex-grow-1 text-nowrap">Свойства: Пакет (http://codenotes-1c.blogspot.ru/) : Типы зн...: Цена</span>
          <div class="pin"></div>
          <svg class="cap-close"><path d="M1 1l9 9M10 1l-9 9" stroke="#666" stroke-width="2"/></svg>
        </div>
        <div class="prop-bar d-flex align-items-center">
          <div class="act-btn d-flex align-items-center justify-content-center"><svg class="ic"><use href="#i-sort"/></svg></div>
          <div class="act-btn tb-pressed d-flex align-items-center justify-content-center"><svg class="ic"><use href="#i-cats"/></svg></div>
          <div class="act-btn d-flex align-items-center justify-content-center"><svg class="ic"><use href="#i-filt"/></svg></div>
          <div class="tb-sep"></div>
          <div class="act-btn d-flex align-items-center justify-content-center"><svg class="ic"><use href="#i-x-gray"/></svg></div>
          <div class="act-btn d-flex align-items-center justify-content-center"><svg class="ic"><use href="#i-ok-gray"/></svg></div>
        </div>
        <div class="prop-body flex-grow-1 d-flex flex-column">
          <div class="prop-cat d-flex align-items-center"><span class="cat-tri"></span><span class="cat-name">Другие:</span></div>

          <div class="prop-row d-flex">
            <div class="prop-label"><span>Имя</span></div>
            <div class="prop-field d-flex">
              <div class="f-val d-flex align-items-center"><svg width="10" height="8"><use href="#i-check"/></svg>Цена</div>
              <div class="f-btn d-flex align-items-center justify-content-center"><svg width="9" height="9"><use href="#i-cross"/></svg></div>
              <div class="red-mark mark-name"></div>
            </div>
          </div>
          <div class="prop-row d-flex">
            <div class="prop-label"><span>Базовый тип</span></div>
            <div class="prop-field d-flex">
              <div class="f-val d-flex align-items-center"><svg width="10" height="8"><use href="#i-check"/></svg>float (http://www.w3.org/2001/XMLSche</div>
              <div class="f-dots">...</div>
              <div class="f-btn d-flex align-items-center justify-content-center"><svg width="9" height="9"><use href="#i-cross"/></svg></div>
              <div class="red-mark mark-type"></div>
            </div>
          </div>
          <div class="prop-row d-flex">
            <div class="prop-label"><span>Вариант</span></div>
            <div class="prop-field d-flex"><div class="f-num"></div><div class="f-btn d-flex align-items-center justify-content-center"><svg width="10" height="8"><use href="#i-check"/></svg></div></div>
          </div>
          <div class="prop-row d-flex">
            <div class="prop-label"><span>Тип элемента</span></div>
            <div class="prop-field d-flex"><div class="f-num"></div><div class="f-btn d-flex align-items-center justify-content-center"><svg width="10" height="8"><use href="#i-check"/></svg></div></div>
          </div>
          <div class="prop-row d-flex">
            <div class="prop-label"><span>Типы объединения</span></div>
            <div class="prop-field d-flex"><div class="f-num"></div><div class="f-btn d-flex align-items-center justify-content-center"><svg width="10" height="8"><use href="#i-check"/></svg></div></div>
          </div>
          <div class="prop-row d-flex">
            <div class="prop-label"><span>Длина</span></div>
            <div class="prop-field d-flex align-items-stretch"><div class="f-num d-flex align-items-center justify-content-end">0</div><div class="f-btn d-flex align-items-center justify-content-center"><svg width="10" height="8"><use href="#i-check"/></svg></div></div>
          </div>
          <div class="prop-row d-flex">
            <div class="prop-label"><span>Минимальная длина</span></div>
            <div class="prop-field d-flex align-items-stretch"><div class="f-num d-flex align-items-center justify-content-end">0</div><div class="f-btn d-flex align-items-center justify-content-center"><svg width="10" height="8"><use href="#i-check"/></svg></div></div>
          </div>
          <div class="prop-row d-flex">
            <div class="prop-label"><span>Максимальная длина</span></div>
            <div class="prop-field d-flex align-items-stretch"><div class="f-num d-flex align-items-center justify-content-end">0</div><div class="f-btn d-flex align-items-center justify-content-center"><svg width="10" height="8"><use href="#i-check"/></svg></div></div>
          </div>
          <div class="prop-row d-flex">
            <div class="prop-label"><span>Пробельные символы</span></div>
            <div class="prop-field d-flex"><div class="f-num"></div><div class="f-btn d-flex align-items-center justify-content-center"><svg width="10" height="8"><use href="#i-check"/></svg></div></div>
          </div>
          <div class="prop-row d-flex">
            <div class="prop-label"><span>Минимум, включающий границу</span></div>
            <div class="prop-field d-flex">
              <div class="f-val d-flex align-items-center"><svg width="10" height="8"><use href="#i-check"/></svg>0</div>
              <div class="f-btn d-flex align-items-center justify-content-center"><svg width="9" height="9"><use href="#i-cross"/></svg></div>
              <div class="red-mark mark-min"></div>
            </div>
          </div>
          <div class="prop-row d-flex">
            <div class="prop-label"><span>Минимум, не включающий границу</span></div>
            <div class="prop-field d-flex"><div class="f-num"></div><div class="f-btn d-flex align-items-center justify-content-center"><svg width="10" height="8"><use href="#i-check"/></svg></div></div>
          </div>
          <div class="prop-row d-flex">
            <div class="prop-label"><span>Максимум, включающий границу</span></div>
            <div class="prop-field d-flex">
              <div class="f-val d-flex align-items-center"><svg width="10" height="8"><use href="#i-check"/></svg>1000000</div>
              <div class="f-btn d-flex align-items-center justify-content-center"><svg width="9" height="9"><use href="#i-cross"/></svg></div>
              <div class="red-mark mark-max"></div>
            </div>
          </div>
          <div class="prop-row d-flex">
            <div class="prop-label"><span class="prop-sel">Максимум, не включающий границу</span></div>
            <div class="prop-field d-flex"><div class="f-num"></div><div class="f-btn d-flex align-items-center justify-content-center"><svg width="10" height="8"><use href="#i-check"/></svg></div></div>
          </div>
          <div class="prop-row d-flex">
            <div class="prop-label"><span>Общее количество цифр</span></div>
            <div class="prop-field d-flex align-items-stretch"><div class="f-num d-flex align-items-center justify-content-end">1</div><div class="f-btn d-flex align-items-center justify-content-center"><svg width="10" height="8"><use href="#i-check"/></svg></div></div>
          </div>
          <div class="prop-row d-flex">
            <div class="prop-label"><span>Количество цифр дробной части</span></div>
            <div class="prop-field d-flex align-items-stretch"><div class="f-num d-flex align-items-center justify-content-end">0</div><div class="f-btn d-flex align-items-center justify-content-center"><svg width="10" height="8"><use href="#i-check"/></svg></div></div>
          </div>

          <div class="flex-grow-1"></div>
          <div class="prop-desc"></div>
        </div>
      </div>
    </div>

    <div class="task-bar d-flex">
      <div class="task-tab d-flex align-items-center"><svg class="ic"><use href="#i-box"/></svg><span>XDTO пакет ПакетXDTO: П...</span></div>
    </div>
    <div class="status-bar d-flex">
      <div class="st-main d-flex align-items-center">Для получения подсказки нажмите F1</div>
      <div class="st-cell st-cap d-flex align-items-center">CAP</div>
      <div class="st-cell st-num d-flex align-items-center">NUM</div>
      <div class="st-cell st-lang d-flex align-items-center">ru<span class="caret me-0"></span></div>
      <svg class="st-grip"><path d="M13 1L1 13M13 4L4 13M13 7l-6 6M13 10l-3 3" stroke="#b5b19a"/></svg>
    </div>
  </div>
</div>
<script src="https://cdn.jsdelivr.net/npm/bootstrap@5.3.2/dist/js/bootstrap.bundle.min.js"></script>
</body>
</html>
